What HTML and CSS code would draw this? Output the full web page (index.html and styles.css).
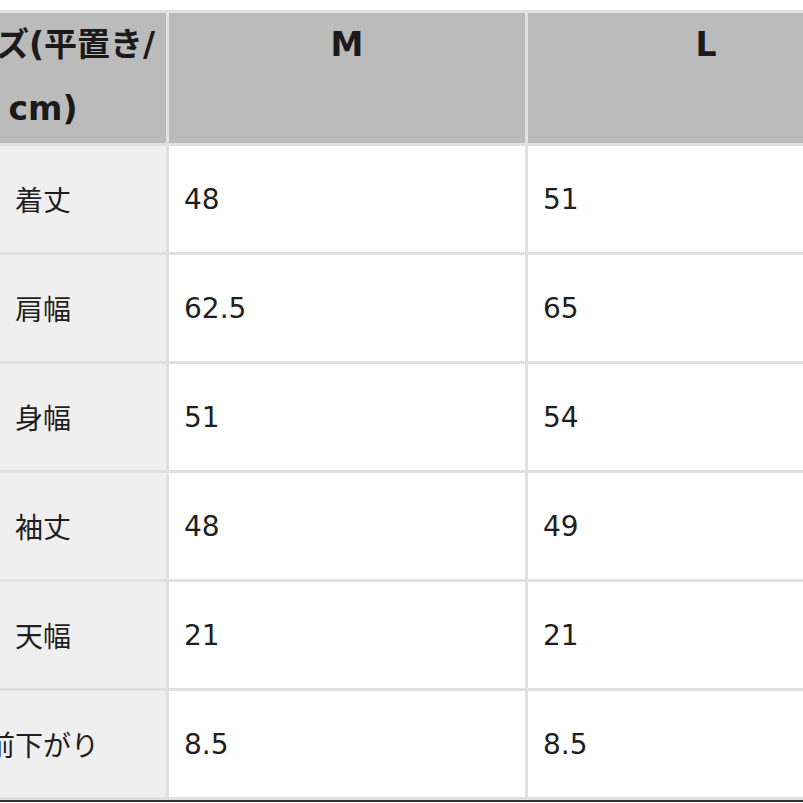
FILE: index.html
```html
<!DOCTYPE html>
<html lang="ja">
<head>
<meta charset="utf-8">
<title>サイズ表</title>
<link rel="stylesheet" href="styles.css">
</head>
<body>
<div class="frame">
  <table class="size-table">
    <colgroup>
      <col class="col-label">
      <col class="col-size">
      <col class="col-size">
    </colgroup>
    <thead>
      <tr>
        <th class="head-label">サイズ(平置き/<br>cm)</th>
        <th class="head-size">M</th>
        <th class="head-size">L</th>
      </tr>
    </thead>
    <tbody>
      <tr><th class="row-label">着丈</th><td class="value">48</td><td class="value">51</td></tr>
      <tr><th class="row-label">肩幅</th><td class="value">62.5</td><td class="value">65</td></tr>
      <tr><th class="row-label">身幅</th><td class="value">51</td><td class="value">54</td></tr>
      <tr><th class="row-label">袖丈</th><td class="value">48</td><td class="value">49</td></tr>
      <tr><th class="row-label">天幅</th><td class="value">21</td><td class="value">21</td></tr>
      <tr><th class="row-label">前下がり</th><td class="value">8.5</td><td class="value">8.5</td></tr>
    </tbody>
  </table>
  <div class="rule"></div>
</div>
</body>
</html>
```

FILE: styles.css
```css
html, body {
  margin: 0;
  padding: 0;
  background: #ffffff;
}

.frame {
  width: 803px;
  height: 803px;
  overflow: hidden;
  padding-top: 10px;
  box-sizing: border-box;
}

.size-table {
  margin-left: -83px;
  table-layout: fixed;
  width: 970px;
  border-collapse: separate;
  border-spacing: 3px;
  background: #e1e1e1;
  font-family: "DejaVu Sans", "Noto Sans CJK JP", sans-serif;
  color: #1f1f1f;
}

.col-label { width: 246px; }
.col-size { width: 356px; }

.size-table th,
.size-table td {
  padding: 0;
}

.head-label,
.head-size {
  background: #bbbbbb;
  color: #1a1a1a;
  font-weight: bold;
  font-size: 33px;
  line-height: 64px;
  height: 130px;
  padding: 1px 4px;
  vertical-align: top;
  text-align: center;
  box-sizing: border-box;
}

.row-label {
  background: #efefef;
  font-weight: normal;
  font-size: 28px;
  height: 106px;
  text-align: center;
  vertical-align: middle;
  color: #1f1f1f;
}

.value {
  background: #ffffff;
  font-size: 28px;
  height: 106px;
  padding-left: 15px !important;
  text-align: left;
  vertical-align: middle;
  color: #1f1f1f;
}

.rule {
  height: 2px;
  background: #333333;
}
```
